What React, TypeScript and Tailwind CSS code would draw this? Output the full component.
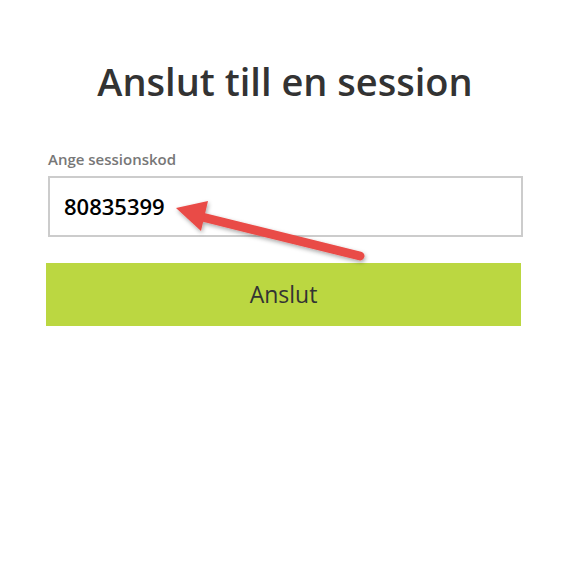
import React from "react";

export default function App() {
  return (
    <div className="relative w-[587px] h-[580px] bg-white" style={{ fontFamily: '"Open Sans", sans-serif' }}>
      <div className="flex flex-col pt-[55px] ml-[46px] w-[475px]">
        <h1 className="text-center text-[38px] leading-[52px] font-semibold text-[#333333] ml-[3px]">Anslut till en session</h1>
        <label className="mt-[42px] text-[15px] leading-[20px] font-semibold text-[#777777] ml-[2px]">Ange sessionskod</label>
        <div className="mt-[7px] ml-[2px] w-[475px] h-[61px] border-2 border-[#cccccc] flex items-center pl-[14px]">
          <span className="text-[22px] font-semibold text-black">80835399</span>
        </div>
        <button className="mt-[26px] h-[63px] bg-[#bbd741] text-[23px] text-[#333333] flex items-center justify-center">Anslut</button>
      </div>
      <svg className="absolute left-0 top-0" width="587" height="580" viewBox="0 0 587 580">
        <defs>
          <filter id="sh" x="-20%" y="-50%" width="140%" height="200%">
            <feDropShadow dx="1" dy="2" stdDeviation="2" floodColor="#000" floodOpacity="0.35" />
          </filter>
        </defs>
        <g filter="url(#sh)">
          <line x1="198" y1="216" x2="360" y2="256" stroke="#e94b47" strokeWidth="9" strokeLinecap="round" />
          <polygon points="176,208 208,201 201,231" fill="#e94b47" />
        </g>
      </svg>
    </div>
  );
}
